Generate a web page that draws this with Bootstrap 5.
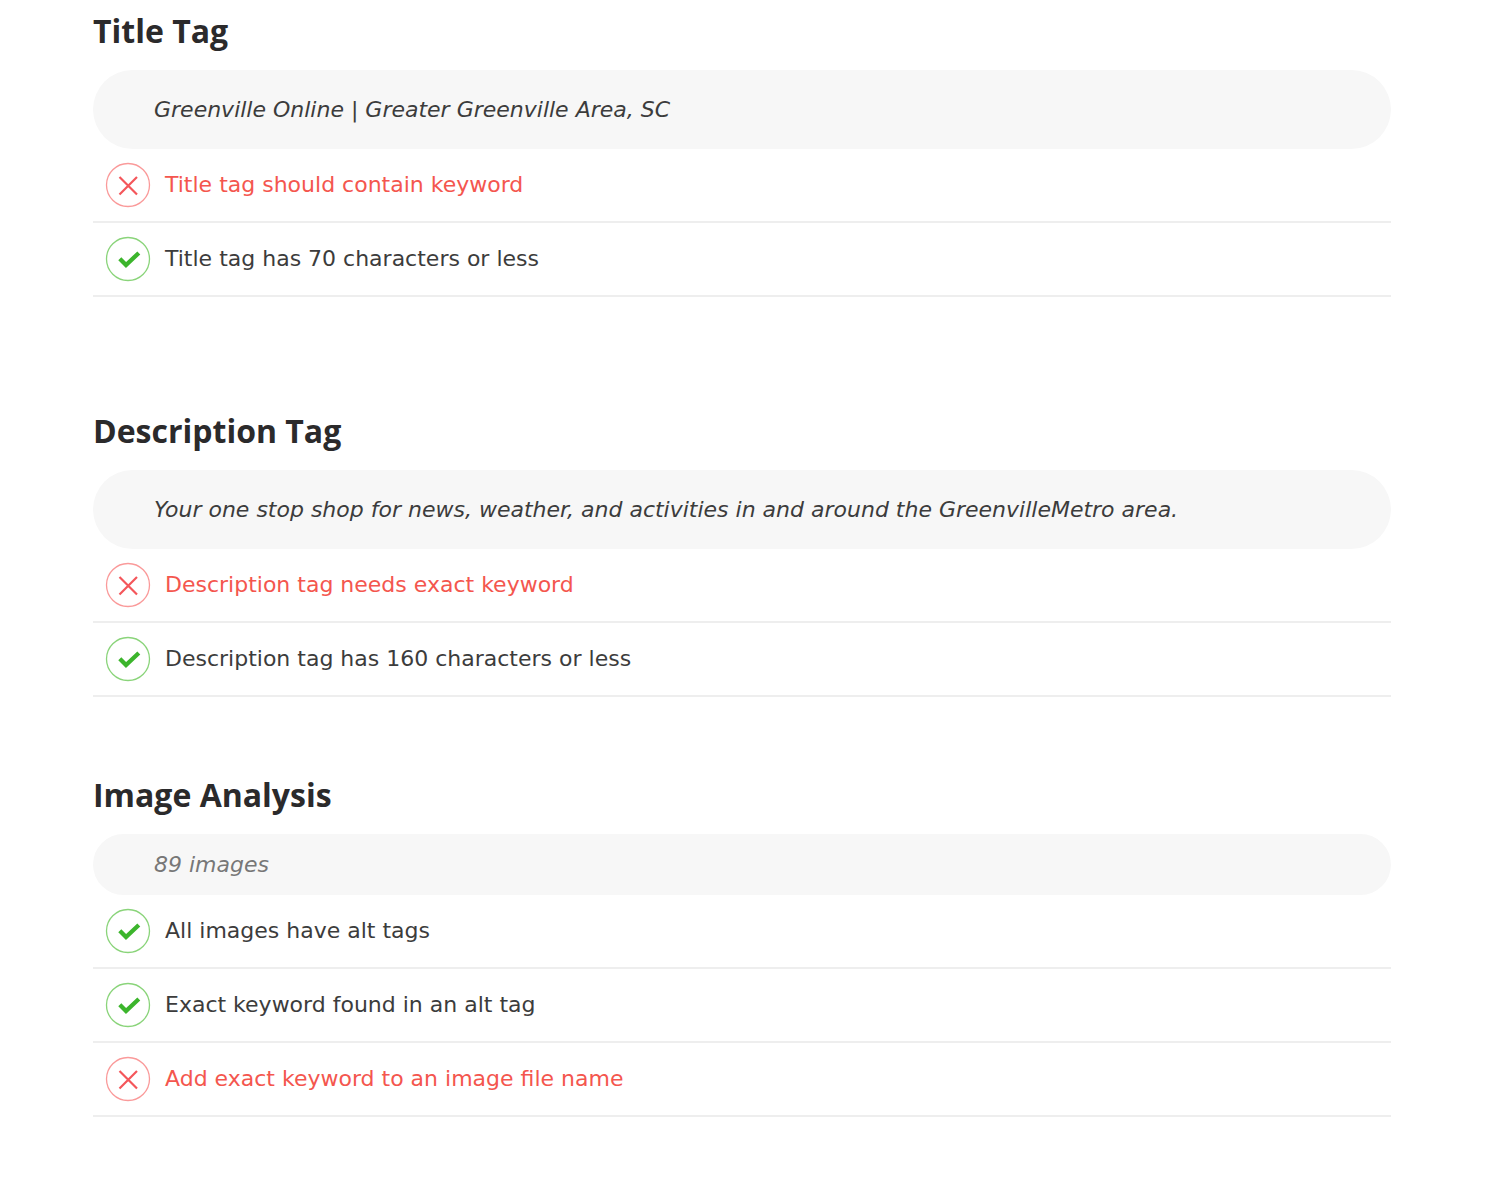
<!DOCTYPE html>
<html lang="en">
<head>
<meta charset="utf-8">
<meta name="viewport" content="width=device-width, initial-scale=1">
<title>Page analysis</title>
<link href="https://cdn.jsdelivr.net/npm/bootstrap@5.3.0/dist/css/bootstrap.min.css" rel="stylesheet">
<style>
body{font-family:"DejaVu Sans",Verdana,sans-serif;font-size:22px;line-height:32px;color:#3c3c3c;background:#fff}
.report{padding:8px 100px 72px 93px}
.report h2{font-family:"Open Sans",sans-serif;font-weight:700;font-size:32px;line-height:46px;color:#2b2a2b;margin-bottom:16px}
.quote{background:#f7f7f7;border-radius:40px;padding:24px 61px;line-height:31px;font-style:italic}
.quote-short{padding:15px 61px;color:#777}
.checks li{height:74px;border-bottom:2px solid #eee;padding-left:12px;gap:14px}
.checks svg{width:46px;height:46px;flex:none}
.checks .fail{color:#f4564e}
.gap-lg{margin-bottom:111px}
.gap-sm{margin-bottom:75px}
</style>
</head>
<body>
<svg class="d-none">
<symbol id="ok" viewBox="0 0 46 46"><circle cx="23" cy="23" r="21.5" fill="none" stroke="#8ad47a" stroke-width="1.3"/><path d="M14.800 22.800L21 29L33.800 17" fill="none" stroke="#3cb52c" stroke-width="4.300"/></symbol>
<symbol id="bad" viewBox="0 0 46 46"><circle cx="23" cy="23" r="21.5" fill="none" stroke="#fa9a9a" stroke-width="1.3"/><path d="M14.500 15L32 32.500M32 15L14.500 32.500" fill="none" stroke="#f4565a" stroke-width="2.200"/></symbol>
</svg>
<main class="report">
<section class="gap-lg">
<h2>Title Tag</h2>
<div class="quote">Greenville Online | Greater Greenville Area, SC</div>
<ul class="checks list-unstyled mb-0">
<li class="d-flex align-items-center fail"><svg aria-hidden="true"><use href="#bad"/></svg><span>Title tag should contain keyword</span></li>
<li class="d-flex align-items-center"><svg aria-hidden="true"><use href="#ok"/></svg><span>Title tag has 70 characters or less</span></li>
</ul>
</section>
<section class="gap-sm">
<h2>Description Tag</h2>
<div class="quote">Your one stop shop for news, weather, and activities in and around the GreenvilleMetro area.</div>
<ul class="checks list-unstyled mb-0">
<li class="d-flex align-items-center fail"><svg aria-hidden="true"><use href="#bad"/></svg><span>Description tag needs exact keyword</span></li>
<li class="d-flex align-items-center"><svg aria-hidden="true"><use href="#ok"/></svg><span>Description tag has 160 characters or less</span></li>
</ul>
</section>
<section>
<h2>Image Analysis</h2>
<div class="quote quote-short">89 images</div>
<ul class="checks list-unstyled mb-0">
<li class="d-flex align-items-center"><svg aria-hidden="true"><use href="#ok"/></svg><span>All images have alt tags</span></li>
<li class="d-flex align-items-center"><svg aria-hidden="true"><use href="#ok"/></svg><span>Exact keyword found in an alt tag</span></li>
<li class="d-flex align-items-center fail"><svg aria-hidden="true"><use href="#bad"/></svg><span>Add exact keyword to an image file name</span></li>
</ul>
</section>
</main>
<script src="https://cdn.jsdelivr.net/npm/bootstrap@5.3.0/dist/js/bootstrap.bundle.min.js"></script>
</body>
</html>
